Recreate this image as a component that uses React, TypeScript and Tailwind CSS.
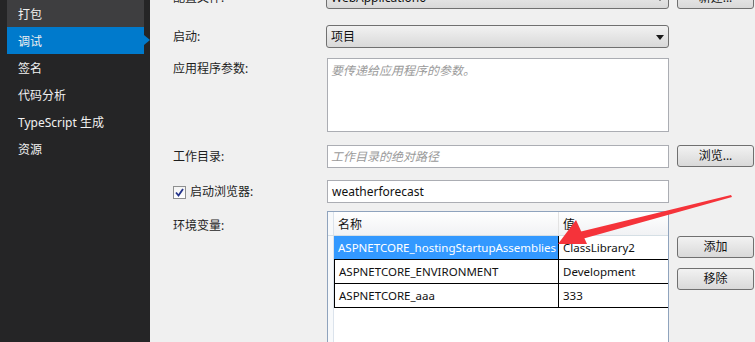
const NAV = ['打包', '调试', '签名', '代码分析', 'TypeScript 生成', '资源'];

const ENV_VARS = [
  { name: 'ASPNETCORE_hostingStartupAssemblies', value: 'ClassLibrary2', selected: true },
  { name: 'ASPNETCORE_ENVIRONMENT', value: 'Development', selected: false },
  { name: 'ASPNETCORE_aaa', value: '333', selected: false },
];

const FONT = "font-['Segoe_UI','Noto_Sans','Noto_Sans_CJK_SC',sans-serif]";

function Caret() {
  return (
    <svg width="8" height="5" viewBox="0 0 8 5" className="shrink-0">
      <path d="M0 0H8L4 5Z" fill="#1a1a1a" />
    </svg>
  );
}

function Dropdown({ text }: { text: string }) {
  return (
    <div className="w-[343px] h-full flex items-center justify-between pl-[4px] pr-[4px] pt-[1px] rounded-[3px] border border-[#707070] bg-gradient-to-b from-[#f2f2f2] to-[#d9d9d9] text-[#111]">
      <span>{text}</span>
      <Caret />
    </div>
  );
}

function Button({ text }: { text: string }) {
  return (
    <div className="w-[77px] h-full flex items-center justify-center rounded-[3px] border border-[#707070] bg-gradient-to-b from-[#f2f2f2] to-[#d9d9d9] text-[#111]">
      {text}
    </div>
  );
}

function Label({ children, top }: { children: React.ReactNode; top?: boolean }) {
  return (
    <div className={`w-[153px] shrink-0 flex text-[#1e1e1e] ${top ? 'items-start pt-[5px]' : 'items-center pt-[1px]'}`}>
      {children}
    </div>
  );
}

export default function App() {
  return (
    <div className={`relative w-[755px] h-[342px] overflow-hidden flex bg-[#f0f0f0] text-[12px] leading-none ${FONT}`}>
      {/* sidebar */}
      <div className="w-[150px] shrink-0 bg-[#252526]">
        {NAV.map((item, i) => (
          <div
            key={item}
            className={`relative ml-[7px] w-[137px] h-[27px] pl-[11px] pt-[2px] flex items-center text-[#f1f1f1] ${
              i === 0 ? 'bg-[#3e3e40]' : i === 1 ? 'bg-[#007acc]' : ''
            }`}
          >
            {item}
            {i === 1 && (
              <div className="absolute right-[-6px] top-[8px] w-0 h-0 border-y-[5px] border-y-transparent border-l-[6px] border-l-[#007acc]" />
            )}
          </div>
        ))}
      </div>

      {/* settings */}
      <div className="flex-1 pl-[23px]">
        <div className="flex flex-col mt-[-14px]">
          <div className="flex h-[23px]">
            <Label>配置文件:</Label>
            <Dropdown text="WebApplication6" />
            <div className="ml-[8px] h-full">
              <Button text="新建..." />
            </div>
          </div>

          <div className="flex h-[23px] mt-[16px]">
            <Label>启动:</Label>
            <Dropdown text="项目" />
          </div>

          <div className="flex h-[74px] mt-[10px]">
            <Label top>应用程序参数:</Label>
            <div className="ml-[1px] w-[342px] h-full bg-white border border-[#abadb3] pl-[3px] pt-[6px] italic text-[#9a9a9a]">
              要传递给应用程序的参数。
            </div>
          </div>

          <div className="flex h-[23px] mt-[13px]">
            <Label>工作目录:</Label>
            <div className="ml-[1px] w-[342px] h-full bg-white border border-[#abadb3] pl-[3px] flex items-center italic text-[#9a9a9a]">
              工作目录的绝对路径
            </div>
            <div className="ml-[8px] h-[22px]">
              <Button text="浏览..." />
            </div>
          </div>

          <div className="flex h-[23px] mt-[12px]">
            <Label>
              <div className="w-[13px] h-[13px] border border-[#8e8f8f] bg-gradient-to-b from-[#f4f4f4] to-[#ffffff] flex items-center justify-center mr-[4px]">
                <svg width="9" height="9" viewBox="0 0 9 9">
                  <path d="M1 4.5L3.5 7.5L8 1" fill="none" stroke="#24348a" strokeWidth="1.8" />
                </svg>
              </div>
              启动浏览器:
            </Label>
            <div className="ml-[1px] w-[342px] h-full bg-white border border-[#abadb3] pl-[4px] flex items-center text-[#111]">
              weatherforecast
            </div>
          </div>

          <div className="flex mt-[8px]">
            <Label top>
              <span className="pt-[4px]">环境变量:</span>
            </Label>
            <div className="ml-[1px] w-[342px] h-[140px] bg-white border border-[#8fa3bd] flex flex-col">
              <div className="flex h-[24px] border-b border-[#d5dfe5]">
                <div className="w-[6px] bg-[#f7f9fb] border-r border-[#dbe3ec]" />
                <div className="w-[224px] pl-[4px] pt-[3px] flex items-center bg-gradient-to-b from-[#ffffff] to-[#f1f2f4] text-[#111]">
                  名称
                </div>
                <div className="flex-1 pl-[4px] pt-[3px] flex items-center border-l border-[#e3e3e3] bg-gradient-to-b from-[#ffffff] to-[#f1f2f4] text-[#111]">
                  值
                </div>
              </div>
              {ENV_VARS.map((row) => (
                <div key={row.name} className="flex h-[24px] text-[11.5px]">
                  <div className="w-[6px] bg-[#f7f9fb] border-r border-[#dbe3ec]" />
                  <div
                    className={`w-[224px] pl-[4px] pt-[1px] flex items-center border-b border-black whitespace-nowrap overflow-hidden ${
                      row.selected ? 'bg-[#3399ff] text-white' : 'border-l border-l-black text-[#111]'
                    }`}
                  >
                    {row.name}
                  </div>
                  <div className="flex-1 pl-[4px] pt-[1px] flex items-center border-l border-b border-black text-[#111]">
                    {row.value}
                  </div>
                </div>
              ))}
              <div className="flex-1 flex">
                <div className="w-[6px] bg-[#f7f9fb] border-r border-[#dbe3ec]" />
              </div>
            </div>
            <div className="ml-[8px] flex flex-col pt-[25px] gap-[10px]">
              <div className="h-[22px]">
                <Button text="添加" />
              </div>
              <div className="h-[22px]">
                <Button text="移除" />
              </div>
            </div>
          </div>
        </div>
      </div>

      {/* red annotation arrow */}
      <svg className="absolute left-0 top-0 pointer-events-none" width="755" height="342" viewBox="0 0 755 342">
        <path d="M731 195 L732 197 L582 239 L579 232 Z" fill="#f5333a" />
        <path d="M558 244 L576 220 L587 244 Z" fill="#f5333a" />
      </svg>
    </div>
  );
}
